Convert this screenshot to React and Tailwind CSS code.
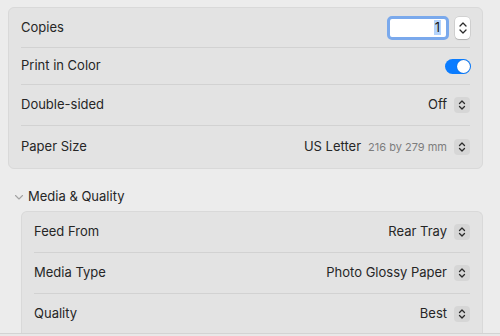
import React from "react";

const Updown = () => (
  <div className="w-[16px] h-[16px] rounded-[4px] bg-[#d6d6d6] flex items-center justify-center shrink-0">
    <svg width="8" height="12" viewBox="0 0 8 12" fill="none" stroke="#2b2b2b" strokeWidth="1.3" strokeLinecap="round" strokeLinejoin="round">
      <path d="M1.5 4.5 L4 2 L6.5 4.5" />
      <path d="M1.5 7.5 L4 10 L6.5 7.5" />
    </svg>
  </div>
);

const Row = ({ label, h, last, children }) => (
  <div className={`flex items-center justify-between ${h} ${last ? "" : "border-b border-[#d2d2d2]"}`}>
    <span className="text-[13px] text-[#262626]">{label}</span>
    <div className="flex items-center">{children}</div>
  </div>
);

export default function App() {
  return (
    <div className="w-[500px] h-[336px] bg-[#ececec] flex flex-col overflow-hidden" style={{ fontFamily: "Inter, 'Liberation Sans', sans-serif" }}>
      <div className="flex-1 overflow-hidden pt-[7px] pl-[8px] pr-[17px]">
        <div className="rounded-[6px] border border-[#d9d9d9] bg-[#e3e3e3] px-[12px]">
          <Row label="Copies" h="h-[40px]">
            <div className="h-[24px] w-[62px] rounded-[5px] border-[3px] border-[#7aa9ec] bg-white flex items-center justify-end pr-[5px]">
              <span className="text-[13px] leading-[15px] text-[#1a1a1a] bg-[#b3d3fb] px-[1px]">1</span>
            </div>
            <div className="ml-[6px] w-[15px] h-[22px] rounded-[4px] bg-white shadow-[0_0_0_0.5px_rgba(0,0,0,0.15),0_1px_1px_rgba(0,0,0,0.15)] flex flex-col items-center justify-center gap-[2px]">
              <svg width="8" height="5" viewBox="0 0 8 5" fill="none" stroke="#2b2b2b" strokeWidth="1.3" strokeLinecap="round" strokeLinejoin="round"><path d="M1 4 L4 1 L7 4" /></svg>
              <svg width="8" height="5" viewBox="0 0 8 5" fill="none" stroke="#2b2b2b" strokeWidth="1.3" strokeLinecap="round" strokeLinejoin="round"><path d="M1 1 L4 4 L7 1" /></svg>
            </div>
          </Row>
          <Row label="Print in Color" h="h-[37px]">
            <div className="w-[26px] h-[15px] rounded-full bg-[#0a7cff] flex items-center justify-end pr-[1px] mr-[-1px]">
              <div className="w-[13px] h-[13px] rounded-full bg-white shadow-[0_0_1px_rgba(0,0,0,0.3)]" />
            </div>
          </Row>
          <Row label="Double-sided" h="h-[41px]">
            <span className="text-[13px] text-[#262626] mr-[7px]">Off</span>
            <Updown />
          </Row>
          <Row label="Paper Size" h="h-[42px]" last>
            <span className="text-[13px] text-[#262626]">US Letter</span>
            <span className="text-[11px] text-[#7d7d7d] ml-[7px] mr-[7px]">216 by 279 mm</span>
            <Updown />
          </Row>
        </div>

        <div className="flex items-center h-[16px] mt-[20px] mb-[6px]">
          <svg width="20" height="8" viewBox="0 0 20 8" fill="none" stroke="#a3a3a3" strokeWidth="1.1" strokeLinecap="round" strokeLinejoin="round" className="shrink-0">
            <path d="M7.5 2.5 L11 6 L14.5 2.5" />
          </svg>
          <span className="text-[13px] text-[#262626]">Media &amp; Quality</span>
        </div>

        <div className="ml-[13px] rounded-t-[6px] border border-b-0 border-[#d9d9d9] bg-[#e3e3e3] pl-[12px] pr-[12px]">
          <Row label="Feed From" h="h-[41px]">
            <span className="text-[13px] text-[#262626] mr-[7px]">Rear Tray</span>
            <Updown />
          </Row>
          <Row label="Media Type" h="h-[41px]">
            <span className="text-[13px] text-[#262626] mr-[7px]">Photo Glossy Paper</span>
            <Updown />
          </Row>
          <Row label="Quality" h="h-[40px]" last>
            <span className="text-[13px] text-[#262626] mr-[7px]">Best</span>
            <Updown />
          </Row>
        </div>
      </div>
      <div className="h-[3px] border-t border-[#d3d3d3] bg-[#e8e8e8]" />
    </div>
  );
}
